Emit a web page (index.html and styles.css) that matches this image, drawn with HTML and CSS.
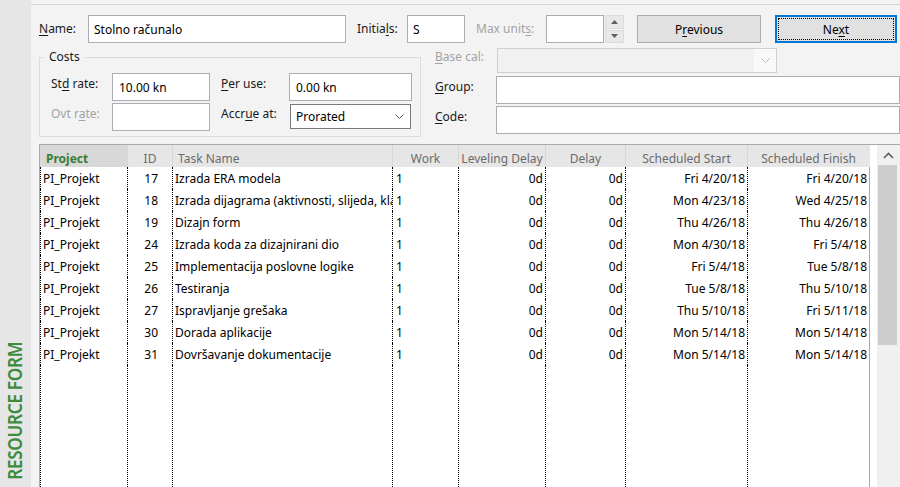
FILE: index.html
```html
<!DOCTYPE html>
<html>
<head>
<meta charset="utf-8">
<link rel="stylesheet" href="styles.css">
</head>
<body>
<div class="app">
  <aside class="side"><span class="side-title">RESOURCE FORM</span></aside>
  <main class="main">
    <div class="form">
      <div class="row1">
        <span class="lbl lbl-name"><u>N</u>ame:</span>
        <div class="input w-name">Stolno računalo</div>
        <span class="lbl lbl-init">Initia<u>l</u>s:</span>
        <div class="input w-init">S</div>
        <span class="lbl lbl-max dis">Max unit<u>s</u>:</span>
        <div class="input w-max"></div>
        <div class="spin">
          <span><svg width="7" height="4" viewBox="0 0 7 4"><path d="M0 4 L3.5 0 L7 4 Z" fill="#606060"/></svg></span>
          <span><svg width="7" height="4" viewBox="0 0 7 4"><path d="M0 0 L7 0 L3.5 4 Z" fill="#606060"/></svg></span>
        </div>
        <button class="btn btn-prev">P<u>r</u>evious</button>
        <button class="btn btn-next">Ne<u>x</u>t</button>
      </div>
      <div class="row2">
        <fieldset class="costs">
          <legend>Costs</legend>
          <div class="costs-grid">
            <span class="lbl">St<u>d</u> rate:</span>
            <div class="input val">10.00 kn</div>
            <span class="lbl lbl-pad"><u>P</u>er use:</span>
            <div class="input val">0.00 kn</div>
            <span class="lbl dis">Ovt r<u>a</u>te:</span>
            <div class="input"></div>
            <span class="lbl lbl-pad">Accr<u>u</u>e at:</span>
            <div class="select sel-acc"><span>Prorated</span><svg width="9" height="5" viewBox="0 0 9 5"><path d="M0.5 0.5 L4.5 4.5 L8.5 0.5" fill="none" stroke="#555" stroke-width="1"/></svg></div>
          </div>
        </fieldset>
        <div class="rside">
          <div class="rrow r-base">
            <span class="lbl dis lbl-r lbl-base"><u>B</u>ase cal:</span>
            <div class="select sel-base"><span class="sel-fill"></span><span class="sel-btn"><svg width="9" height="5" viewBox="0 0 9 5"><path d="M0.5 0.5 L4.5 4.5 L8.5 0.5" fill="none" stroke="#b8b8b8" stroke-width="1"/></svg></span></div>
          </div>
          <div class="rrow r-group">
            <span class="lbl lbl-r"><u>G</u>roup:</span>
            <div class="input w-wide"></div>
          </div>
          <div class="rrow r-code">
            <span class="lbl lbl-r"><u>C</u>ode:</span>
            <div class="input w-wide"></div>
          </div>
        </div>
      </div>
    </div>
    <div class="grid">
      <table class="tbl">
        <thead>
          <tr>
            <th class="c1 h-proj">Project</th>
            <th class="c2">ID</th>
            <th class="c3 h-left">Task Name</th>
            <th class="c4">Work</th>
            <th class="c5">Leveling Delay</th>
            <th class="c6">Delay</th>
            <th class="c7">Scheduled Start</th>
            <th class="c8">Scheduled Finish</th>
          </tr>
        </thead>
        <tbody>
          <tr><td class="c1">PI_Projekt</td><td class="c2">17</td><td class="c3">Izrada ERA modela</td><td class="c4">1</td><td class="c5">0d</td><td class="c6">0d</td><td class="c7">Fri 4/20/18</td><td class="c8">Fri 4/20/18</td></tr>
          <tr><td class="c1">PI_Projekt</td><td class="c2">18</td><td class="c3">Izrada dijagrama (aktivnosti, slijeda, klasa)</td><td class="c4">1</td><td class="c5">0d</td><td class="c6">0d</td><td class="c7">Mon 4/23/18</td><td class="c8">Wed 4/25/18</td></tr>
          <tr><td class="c1">PI_Projekt</td><td class="c2">19</td><td class="c3">Dizajn form</td><td class="c4">1</td><td class="c5">0d</td><td class="c6">0d</td><td class="c7">Thu 4/26/18</td><td class="c8">Thu 4/26/18</td></tr>
          <tr><td class="c1">PI_Projekt</td><td class="c2">24</td><td class="c3">Izrada koda za dizajnirani dio</td><td class="c4">1</td><td class="c5">0d</td><td class="c6">0d</td><td class="c7">Mon 4/30/18</td><td class="c8">Fri 5/4/18</td></tr>
          <tr><td class="c1">PI_Projekt</td><td class="c2">25</td><td class="c3">Implementacija poslovne logike</td><td class="c4">1</td><td class="c5">0d</td><td class="c6">0d</td><td class="c7">Fri 5/4/18</td><td class="c8">Tue 5/8/18</td></tr>
          <tr><td class="c1">PI_Projekt</td><td class="c2">26</td><td class="c3">Testiranja</td><td class="c4">1</td><td class="c5">0d</td><td class="c6">0d</td><td class="c7">Tue 5/8/18</td><td class="c8">Thu 5/10/18</td></tr>
          <tr><td class="c1">PI_Projekt</td><td class="c2">27</td><td class="c3">Ispravljanje grešaka</td><td class="c4">1</td><td class="c5">0d</td><td class="c6">0d</td><td class="c7">Thu 5/10/18</td><td class="c8">Fri 5/11/18</td></tr>
          <tr><td class="c1">PI_Projekt</td><td class="c2">30</td><td class="c3">Dorada aplikacije</td><td class="c4">1</td><td class="c5">0d</td><td class="c6">0d</td><td class="c7">Mon 5/14/18</td><td class="c8">Mon 5/14/18</td></tr>
          <tr><td class="c1">PI_Projekt</td><td class="c2">31</td><td class="c3">Dovršavanje dokumentacije</td><td class="c4">1</td><td class="c5">0d</td><td class="c6">0d</td><td class="c7">Mon 5/14/18</td><td class="c8">Mon 5/14/18</td></tr>
          <tr class="filler"><td class="c1"></td><td class="c2"></td><td class="c3"></td><td class="c4"></td><td class="c5"></td><td class="c6"></td><td class="c7"></td><td class="c8"></td></tr>
        </tbody>
      </table>
      <div class="gap"></div>
      <div class="vscroll">
        <div class="arrow"><svg width="11" height="7" viewBox="0 0 11 7"><path d="M1 6 L5.5 1.5 L10 6" fill="none" stroke="#606060" stroke-width="1.6"/></svg></div>
        <div class="thumb"></div>
      </div>
    </div>
  </main>
</div>
</body>
</html>
```

FILE: styles.css
```css
* { box-sizing: border-box; }
html, body { margin: 0; padding: 0; }
body {
  font-family: "Noto Sans", "Open Sans", sans-serif;
  font-size: 12px;
  color: #000;
  background: #f3f3f3;
}
u { text-decoration: underline; text-underline-offset: 2px; }

.app { display: flex; width: 900px; height: 487px; overflow: hidden; }

.side {
  width: 31px; flex: none; background: #e6e6e6;
  display: flex; flex-direction: column; justify-content: flex-end; align-items: center;
  padding-right: 2px;
}
.side-title {
  writing-mode: vertical-rl; transform: rotate(180deg) scaleY(0.9);
  font-weight: 600; font-size: 19px; line-height: 22px; letter-spacing: -0.3px;
  color: #3d8b3d; white-space: nowrap;
}

.main { flex: 1; min-width: 0; background: #f3f3f3; padding-top: 4px; display: flex; flex-direction: column; }
.form { border-top: 1px solid #d6d6d6; padding: 10px 0 0 8px; }

.lbl { line-height: 16px; white-space: nowrap; color: #1a1a1a; }
.dis { color: #a3a3a3; }

.row1 { display: flex; align-items: center; height: 28px; }
.lbl-name { width: 49px; }
.lbl-init { margin-left: 11px; width: 50px; }
.lbl-max { margin-left: 11px; width: 70px; }

.input {
  height: 28px; background: #fff; border: 1px solid #abadb3;
  padding-left: 5px; display: flex; align-items: center; white-space: nowrap; overflow: hidden;
  color: #000;
}
.w-name { width: 258px; }
.w-init { width: 58px; }
.w-max { width: 58px; }
.val { padding-left: 6px; }

.spin { margin-left: 1px; width: 19px; height: 28px; display: flex; flex-direction: column; gap: 1px; }
.spin span { flex: 1; background: #e8e8e8; border: 1px solid #dcdcdc; display: flex; align-items: center; justify-content: center; }

.btn {
  height: 28px; background: #e1e1e1; border: 1px solid #adadad;
  font: inherit; color: #000; padding: 0;
}
.btn-prev { margin-left: 13px; width: 124px; }
.btn-next { margin-left: 14px; width: 122px; border: 2px solid #0078d7; outline: 1px dotted #000; outline-offset: -4px; }

.row2 { display: flex; margin-top: 5px; height: 89px; }

.costs {
  margin: 1px 0 0 0; width: 382px; height: 88px;
  border: 1px solid #dcdcdc; padding: 0 8px 0 11px; min-width: 0;
}
.costs legend {
  margin-left: -8px; padding: 0 5px 0 6px; line-height: 16px; color: #1a1a1a;
}
.costs-grid {
  margin-top: 8px;
  display: grid; grid-template-columns: 61px 98px 79px 123px;
  grid-auto-rows: 28px; row-gap: 2px;
}
.costs-grid .lbl { padding-top: 3px; }
.costs-grid .lbl-pad { padding-left: 11px; }

.select { display: flex; align-items: center; background: #fff; }
.sel-acc {
  margin: 1px 1px 2px 1px; height: 25px; border: 1px solid #7a7a7a;
  padding: 0 6px 0 5px; justify-content: space-between;
}

.rside { margin-left: 14px; display: flex; flex-direction: column; width: 465px; }
.rrow { display: flex; align-items: flex-start; }
.lbl-r { width: 61px; padding-top: 3px; }
.lbl-base { width: 62px; padding-top: 1px; }
.r-base { height: 25px; }
.r-group { margin-top: 3px; }
.r-code { margin-top: 2px; }
.sel-base { width: 280px; height: 25px; border: 1px solid #d0d0d0; background: #f1f1f1; }
.sel-fill { flex: 1; }
.sel-btn { width: 22px; height: 100%; background: #f9f9f9; display: flex; align-items: center; justify-content: center; }
.w-wide { width: 404px; }

.grid {
  margin: 7px 0 0 8px; flex: 1; min-height: 0;
  display: flex; background: #fff;
  border-top: 1px solid #a9a9a9; border-left: 1px solid #a9a9a9;
  overflow: hidden;
}
.tbl { border-collapse: separate; border-spacing: 0; table-layout: fixed; width: 830px; flex: none; align-self: flex-start; }
.tbl th, .tbl td { padding: 0; white-space: nowrap; overflow: hidden; }
.tbl th {
  height: 22px; background: #e6e6e6; color: #6b6b6b; font-weight: normal;
  text-align: center; padding-top: 4px; line-height: 17px;
  border-right: 1px solid #d6d6d6;
}
.tbl th.c1 { border-left: 1px solid #d8d8d8; }
.tbl th.h-proj { background: #d8d8d8; color: #3a7d34; font-weight: 700; text-align: left; padding-left: 5px; }
.tbl th.h-left { text-align: left; padding-left: 5px; }
.tbl th.c8 { border-right-color: #e6e6e6; }

.tbl td { height: 22px; line-height: 21px; border-right: 1px dotted #000; color: #000; }
.tbl td.c1 { border-left: 1px dotted #000; padding-left: 2px; }
.tbl td.c2 { text-align: right; padding-right: 14px; }
.tbl td.c3 { padding-left: 2px; text-overflow: clip; }
.tbl td.c4 { padding-left: 3px; }
.tbl td.c5, .tbl td.c6, .tbl td.c7, .tbl td.c8 { text-align: right; padding-right: 2px; }
.tbl td.c8 { border-right: 1px solid #a9a9a9; }
.tbl tr.filler td { height: 122px; }

.c1 { width: 88px; }
.c2 { width: 45px; }
.c3 { width: 220px; }
.c4 { width: 66px; }
.c5 { width: 87px; }
.c6 { width: 80px; }
.c7 { width: 122px; }
.c8 { width: 122px; }

.gap { width: 7px; flex: none; }
.vscroll { width: 23px; flex: none; background: #f0f0f0; display: flex; flex-direction: column; }
.arrow { height: 20px; display: flex; align-items: center; justify-content: flex-start; padding-left: 6px; }
.thumb { margin-left: 1px; width: 19px; height: 180px; background: #cdcdcd; }
```
